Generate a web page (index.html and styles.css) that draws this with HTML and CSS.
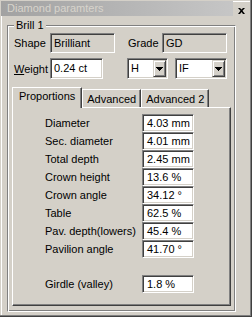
FILE: index.html
```html
<!DOCTYPE html>
<html lang="en">
<head>
    <meta charset="UTF-8">
    <title>Diamond paramters</title>
    <link rel="stylesheet" href="styles.css">
</head>
<body>
    <div class="window">
        <div class="titlebar">
            <div class="caption">Diamond paramters</div>
            <div class="close">
                <svg width="7" height="6" viewBox="0 0 7 6"><path d="M0 0H2L3.5 1.5L5 0H7L4.5 2.7L7 6H5L3.5 4L2 6H0L2.5 2.7Z" fill="#000"/></svg>
            </div>
        </div>
        <div class="group">
            <div class="group-title">Brill 1</div>
            <!-- Shape / grade -->
            <div class="row row-top">
                <span class="lbl lbl-first">Shape</span>
                <div class="field ro shape">Brilliant</div>
                <span class="lbl lbl-grade">Grade</span>
                <div class="field ro grade">GD</div>
            </div>
            <!-- Weight, colour and clarity -->
            <div class="row row-weight">
                <span class="lbl lbl-first"><u>W</u>eight</span>
                <div class="field weight">0.24 ct</div>
                <div class="combo combo-color">
                    <span class="combo-text">H</span>
                    <span class="drop"><svg width="7" height="4" viewBox="0 0 7 4"><path d="M0 0H7V1H6V2H5V3H4V4H3V3H2V2H1V1H0Z" fill="#000"/></svg></span>
                </div>
                <div class="combo combo-clarity">
                    <span class="combo-text">IF</span>
                    <span class="drop"><svg width="7" height="4" viewBox="0 0 7 4"><path d="M0 0H7V1H6V2H5V3H4V4H3V3H2V2H1V1H0Z" fill="#000"/></svg></span>
                </div>
            </div>
            <div class="tabctl">
                <div class="tabs">
                    <div class="tab selected">Proportions</div>
                    <div class="tab">Advanced</div>
                    <div class="tab">Advanced 2</div>
                </div>
                <div class="panel">
                    <div class="props">
                        <span>Diameter</span><div class="field">4.03 mm</div>
                        <span>Sec. diameter</span><div class="field">4.01 mm</div>
                        <span>Total depth</span><div class="field">2.45 mm</div>
                        <span>Crown height</span><div class="field">13.6 %</div>
                        <span>Crown angle</span><div class="field">34.12 °</div>
                        <span>Table</span><div class="field">62.5 %</div>
                        <span>Pav. depth(lowers)</span><div class="field">45.4 %</div>
                        <span>Pavilion angle</span><div class="field">41.70 °</div>
                    </div>
                    <div class="props girdle">
                        <span>Girdle (valley)</span><div class="field">1.8 %</div>
                    </div>
                </div>
            </div>
        </div>
    </div>
</body>
</html>
```

FILE: styles.css
```css
body {
    margin: 0;
    background-color: #d4d0c8;
    font-family: "Liberation Sans", Arial, sans-serif;
    font-size: 11px;
    color: #000;
}
.window {
    width: 252px;
    height: 317px;
    box-sizing: border-box;
    padding: 1px 0 0 1px;
    box-shadow: inset -1px -1px #404040, inset -2px -2px #808080, inset 1px 1px #d4d0c8, inset 2px 2px #fff;
}
.titlebar {
    display: flex;
    height: 15px;
}
.caption {
    width: 232px;
    box-sizing: border-box;
    padding-left: 6px;
    line-height: 15px;
    color: #d8d4cc;
    background: linear-gradient(to right, #a2a2a2, #c6c6c6);
    white-space: nowrap;
}
.close {
    padding: 7px 0 0 5px;
}
.close svg {
    display: block;
}
/* group box with etched border */
.group {
    margin: 9px 0 0 6px;
    width: 229px;
    height: 287px;
    box-sizing: border-box;
    border: 1px solid;
    border-color: #808080 #fff #fff #808080;
    box-shadow: inset 1px 1px #fff, inset -1px -1px #808080;
}
.group-title {
    width: max-content;
    margin: -7px 0 0 6px;
    padding: 0 2px;
    line-height: 13px;
    background-color: #d4d0c8;
}
.row {
    display: flex;
    align-items: center;
    padding-left: 6px;
}
.row-top {
    margin-top: 1px;
}
.row-weight {
    margin-top: 5px;
}
.lbl-first {
    width: 36px;
}
.lbl-grade {
    width: 34px;
    margin-left: 13px;
}
/* sunken edit box */
.field {
    box-sizing: border-box;
    height: 18px;
    border: 1px solid;
    border-color: #808080 #fff #fff #808080;
    box-shadow: inset 1px 1px #404040, inset -1px -1px #d4d0c8;
    background-color: #fff;
    padding-left: 4px;
    line-height: 16px;
    white-space: nowrap;
}
.field.ro {
    background-color: #d4d0c8;
    height: 20px;
    line-height: 18px;
    padding-left: 3px;
}
.shape, .grade {
    width: 65px;
}
.weight {
    width: 53px;
    height: 21px;
    line-height: 19px;
    padding-left: 3px;
}
.combo {
    display: flex;
    box-sizing: border-box;
    height: 21px;
    padding: 1px;
    border: 1px solid;
    border-color: #808080 #fff #fff #808080;
    box-shadow: inset 1px 1px #404040, inset -1px -1px #d4d0c8;
    background-color: #fff;
}
.combo-color {
    width: 41px;
    margin-left: 24px;
}
.combo-clarity {
    width: 52px;
    margin-left: 7px;
}
.combo-text {
    flex: 1;
    padding-left: 2px;
    line-height: 17px;
}
.drop {
    width: 13px;
    height: 17px;
    box-sizing: border-box;
    display: flex;
    align-items: center;
    justify-content: center;
    border: 1px solid;
    border-color: #d4d0c8 #404040 #404040 #d4d0c8;
    box-shadow: inset 1px 1px #fff, inset -1px -1px #808080;
    background-color: #d4d0c8;
}
/* tab control */
.tabctl {
    margin: 8px 0 0 4px;
}
.tabs {
    display: flex;
    align-items: flex-end;
}
.tab {
    height: 18px;
    box-sizing: border-box;
    padding: 3px 4px 0 4px;
    line-height: 13px;
    border-top: 1px solid #fff;
    border-left: 1px solid #fff;
    border-right: 1px solid #404040;
    box-shadow: inset -1px 0 #808080;
    white-space: nowrap;
}
.tab.selected {
    position: relative;
    z-index: 1;
    height: 21px;
    margin-bottom: -1px;
    padding: 2px 6px 0 6px;
    background-color: #d4d0c8;
}
.panel {
    width: 219px;
    height: 199px;
    box-sizing: border-box;
    border: 1px solid;
    border-color: #fff #404040 #404040 #fff;
    box-shadow: inset -1px -1px #808080;
    padding: 6px 0 0 32px;
}
.props {
    display: grid;
    grid-template-columns: 97px 52px;
    grid-auto-rows: 18px;
    align-items: center;
}
.girdle {
    margin-top: 17px;
}
```
